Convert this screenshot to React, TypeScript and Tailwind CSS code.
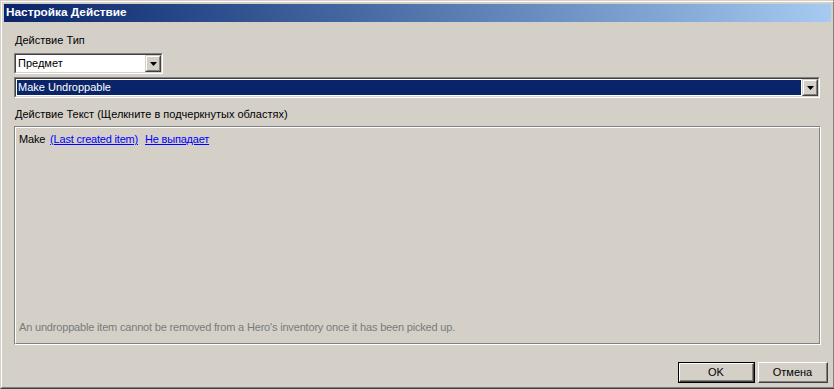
import React from "react";

const font = { fontFamily: '"Liberation Sans", Arial, sans-serif' };

function DropArrow() {
  return (
    <div className="w-[16px] h-[17px] bg-[#d4d0c8] border-t border-l border-t-[#d4d0c8] border-l-[#d4d0c8] border-b border-r border-b-[#404040] border-r-[#404040] flex">
      <div className="flex-1 border-t border-l border-t-white border-l-white border-b border-r border-b-[#808080] border-r-[#808080] flex items-center justify-center">
        <svg width="7" height="4" viewBox="0 0 7 4">
          <path d="M0 0H7L3.5 4Z" fill="#000" />
        </svg>
      </div>
    </div>
  );
}

function Combo({ text, selected, className }: { text: string; selected?: boolean; className: string }) {
  return (
    <div className={`${className} h-[21px] border-t border-l border-t-[#808080] border-l-[#808080] border-b border-r border-b-white border-r-white flex`}>
      <div className="flex-1 flex border-t border-l border-t-[#404040] border-l-[#404040] border-b border-r border-b-[#d4d0c8] border-r-[#d4d0c8] bg-white">
        <div className="flex-1 flex items-stretch p-[1px]">
          <div className={`flex-1 flex items-center pl-[1px] text-[11px] leading-[13px] ${selected ? "bg-[#0a246a] text-white" : "text-black"}`}>
            {text}
          </div>
        </div>
        <DropArrow />
      </div>
    </div>
  );
}

function Button({ label, def }: { label: string; def?: boolean }) {
  const inner = (
    <div className="flex-1 flex border-t border-l border-t-white border-l-white border-b border-r border-b-[#404040] border-r-[#404040]">
      <div className="flex-1 flex items-center justify-center border-b border-r border-b-[#808080] border-r-[#808080] text-[11px] text-black">
        {label}
      </div>
    </div>
  );
  return def ? (
    <div className="w-[77px] h-[21px] border border-black flex bg-[#d4d0c8]">{inner}</div>
  ) : (
    <div className="w-[70px] h-[21px] flex bg-[#d4d0c8]">{inner}</div>
  );
}

export default function App() {
  return (
    <div style={font} className="w-[834px] h-[389px] bg-[#d4d0c8] border-t border-l border-t-[#d4d0c8] border-l-[#d4d0c8] border-b border-r border-b-[#404040] border-r-[#404040] flex">
      <div className="flex-1 flex flex-col border-t border-l border-t-white border-l-white border-b border-r border-b-[#808080] border-r-[#808080] p-[2px]">
        <div className="h-[18px] bg-gradient-to-r from-[#0a246a] to-[#a6caf0] flex items-center pl-[2px] text-white font-bold text-[11.8px]">
          Настройка Действие
        </div>
        <div className="flex-1 flex flex-col px-[10px]">
          <div className="mt-[12px] ml-[1px] h-[13px] leading-[13px] text-[11px] text-black">Действие Тип</div>
          <Combo className="mt-[6px] w-[149px]" text="Предмет" />
          <Combo className="mt-[3px] w-[806px]" text="Make Undroppable" selected />
          <div className="mt-[10px] ml-[1px] h-[13px] leading-[13px] text-[11px] text-black">
            Действие Текст (Щелкните в подчеркнутых областях)
          </div>
          <div className="mt-[5px] w-[807px] h-[219px] flex border-t border-l border-t-[#808080] border-l-[#808080] border-b border-r border-b-white border-r-white">
            <div className="flex-1 flex flex-col justify-between border-t border-l border-t-white border-l-white border-b border-r border-b-[#808080] border-r-[#808080] pl-[3px] pt-[5px] pb-[9px] text-[11px] leading-[13px]">
              <div className="flex gap-[5px] tracking-[-0.2px]">
                <span className="text-black">Make</span>
                <span className="text-[#0000ff] underline">(Last created item)</span>
                <span className="text-[#0000ff] underline ml-[2px]">Не выпадает</span>
              </div>
              <div className="text-[#7a7a7a] tracking-[-0.18px]">
                An undroppable item cannot be removed from a Hero's inventory once it has been picked up.
              </div>
            </div>
          </div>
          <div className="mt-[17px] flex justify-end gap-[3px] mr-[-7px]">
            <Button label="OK" def />
            <Button label="Отмена" />
          </div>
        </div>
      </div>
    </div>
  );
}
